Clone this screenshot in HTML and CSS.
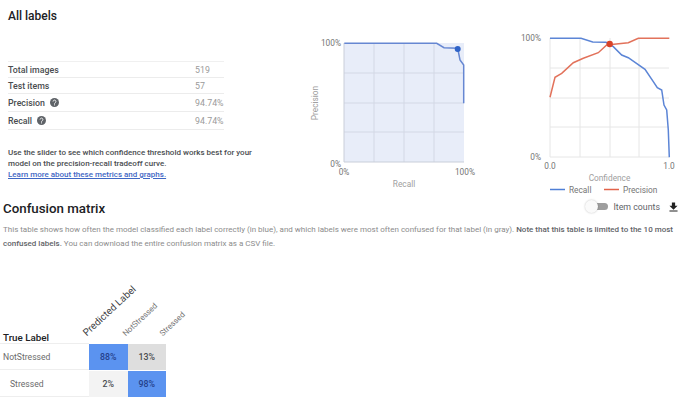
FILE: index.html
```html
<!DOCTYPE html>
<html lang="en">
<head>
<meta charset="utf-8">
<title>Evaluation</title>
<link rel="stylesheet" href="styles.css">
</head>
<body>
<section class="labels">
  <div class="summary">
    <h2 class="title">All labels</h2>
    <table class="stats">
      <tr><th>Total images</th><td>519</td></tr>
      <tr><th>Test items</th><td>57</td></tr>
      <tr class="tall"><th>Precision <svg class="help" viewBox="0 0 24 24"><circle cx="12" cy="12" r="12" fill="#5f6368"/><path d="M8.2 9.4a3.8 3.8 0 1 1 6 3.1c-1.3.9-2.2 1.500-2.200 3" fill="none" stroke="#fff" stroke-width="2.400"/><rect x="10.700" y="17" width="2.600" height="2.600" fill="#fff"/></svg></th><td>94.74%</td></tr>
      <tr class="tall"><th>Recall <svg class="help" viewBox="0 0 24 24"><circle cx="12" cy="12" r="12" fill="#5f6368"/><path d="M8.2 9.4a3.8 3.8 0 1 1 6 3.1c-1.3.9-2.2 1.500-2.200 3" fill="none" stroke="#fff" stroke-width="2.400"/><rect x="10.700" y="17" width="2.600" height="2.600" fill="#fff"/></svg></th><td>94.74%</td></tr>
    </table>
    <p class="hint">Use the slider to see which confidence threshold works best for your model on the precision-recall tradeoff curve.<br><a href="#">Learn more about these metrics and graphs.</a></p>
  </div>
  <svg class="chart-pr" viewBox="310 30 180 165">
    <rect x="344" y="43" width="120" height="119" fill="#e8edf9"/>
    <path d="M374 43V162M404 43V162M434 43V162M344 73H464M344 103H464M344 132H464" stroke="#d3d8e5" stroke-width="1" fill="none"/>
    <path d="M344 162H464M344 43V162" stroke="#c9ced9" stroke-width="1" fill="none"/>
    <polyline points="344.300,43.300 436.700,43.300 444,47.700 457.700,48.300 460,60 463.700,65 463.700,103.300" fill="none" stroke="#6687d2" stroke-width="1.500"/>
    <circle cx="457.700" cy="49" r="3" fill="#2f63c8"/>
    <text class="axis end" x="341" y="46">100%</text>
    <text class="axis end" x="341" y="167">0%</text>
    <text class="axis mid" x="344" y="175">0%</text>
    <text class="axis mid" x="465" y="175">100%</text>
    <text class="axis mid light" x="404" y="187">Recall</text>
    <text class="axis mid light" transform="translate(318 103) rotate(-90)">Precision</text>
  </svg>
  <svg class="chart-conf" viewBox="510 25 177 170">
    <path d="M550 68H669M550 98H669M550 127H669M580 38V157M610 38V157M639 38V157M550 38V157M550 157H669" stroke="#e6e6e6" stroke-width="1" fill="none"/>
    <polyline points="550,38.300 581,38.300 592.700,42 606,42.300 613.300,46.700 621.700,55 628.300,57.700 645,69.300 653.300,81.700 657.300,87.700 661.700,90 664,105 666.700,110 668.300,130 669.300,157.300" fill="none" stroke="#5c85d6" stroke-width="1.500"/>
    <polyline points="550,97.300 555,77.300 561.700,73.300 573.300,62.700 583.300,58.300 598.300,52.700 606.700,45 628.300,42.700 638.300,38.300 669.300,38.300" fill="none" stroke="#e2725b" stroke-width="1.500"/>
    <circle cx="609.700" cy="44" r="3.200" fill="#d8432a"/>
    <text class="axis end" x="541" y="41">100%</text>
    <text class="axis end" x="541" y="160">0%</text>
    <text class="axis mid" x="550" y="169">0.0</text>
    <text class="axis mid" x="669" y="169">1.0</text>
    <text class="axis mid light" x="609.500" y="181">Confidence</text>
    <path d="M550 189.500H565" stroke="#4f7fd6" stroke-width="1.500"/>
    <text class="axis" x="569" y="192.500">Recall</text>
    <path d="M604 189.500H619" stroke="#e2634a" stroke-width="1.500"/>
    <text class="axis" x="623" y="192.500">Precision</text>
  </svg>
</section>
<section class="confusion">
  <div class="confusion-head">
    <h2 class="title big">Confusion matrix</h2>
    <div class="tools">
      <span class="toggle"><span class="knob"></span></span>
      <span class="tool-label">Item counts</span>
      <svg class="download" viewBox="0 0 10 10"><path d="M3.200 0H6.800V3.500H9.500L5 8 .5 3.500H3.200ZM.5 8.800H9.500V10H.5Z" fill="#222"/></svg>
    </div>
  </div>
  <div class="desc">
    <p class="desc-line">This table shows how often the model classified each label correctly (in blue), and which labels were most often confused for that label (in gray). <b>Note that this table is limited to the 10 most</b></p>
    <p class="desc-line"><b>confused labels.</b> You can download the entire confusion matrix as a CSV file.</p>
  </div>
  <div class="matrix">
    <div class="mrow head">
      <div class="rowlabel true">True Label</div>
      <div class="col"><span class="rot strong">Predicted Label</span></div>
      <div class="col"><span class="rot shift1">NotStressed</span></div>
      <div class="col spacer"><span class="rot shift2">Stressed</span></div>
    </div>
    <div class="mrow line">
      <div class="rowlabel">NotStressed</div>
      <div class="cell blue">88%</div>
      <div class="cell grey">13%</div>
    </div>
    <div class="mrow line">
      <div class="rowlabel indent">Stressed</div>
      <div class="cell pale">2%</div>
      <div class="cell blue">98%</div>
    </div>
  </div>
</section>
</body>
</html>
```
FILE: styles.css
```css
* { box-sizing: border-box; }
html, body { margin: 0; padding: 0; }
body {
  width: 687px;
  height: 404px;
  overflow: hidden;
  background: #fff;
  font-family: Roboto, "Liberation Sans", sans-serif;
  color: #3c4043;
}
.labels {
  display: flex;
  height: 195px;
}
.summary {
  width: 310px;
  flex: none;
  padding: 9px 0 0 8px;
}
.title {
  margin: 0;
  font-size: 12px;
  line-height: 15px;
  font-weight: 500;
  color: #202124;
}
.title.big {
  font-size: 13.300px;
  line-height: 18px;
  padding-top: 1px;
}
.stats {
  width: 216px;
  margin-top: 37px;
  border-collapse: collapse;
  border-top: 1px solid #f0f0f0;
  font-size: 8.800px;
}
.stats tr { height: 16px; border-bottom: 1px solid #ececec; }
.stats tr.tall { height: 18px; }
.stats th {
  padding: 0;
  text-align: left;
  font-weight: 500;
  color: #4a4d50;
}
.stats td {
  width: 29px;
  padding: 0;
  color: #9a9a9a;
}
.help {
  width: 9px;
  height: 9px;
  margin-left: 3px;
  vertical-align: -1.500px;
}
.hint {
  margin: 17px 0 0;
  width: 250px;
  font-size: 8px;
  line-height: 11px;
  font-weight: 500;
  color: #4a4d50;
}
.hint a {
  color: #3f67c4;
  text-decoration: underline;
}
.chart-pr { width: 180px; height: 165px; margin-top: 30px; flex: none; }
.chart-conf { width: 177px; height: 170px; margin-top: 25px; margin-left: 20px; flex: none; }
.axis {
  font-family: Roboto, "Liberation Sans", sans-serif;
  font-size: 8.300px;
  fill: #757575;
}
.axis.light { fill: #a0a0a0; }
.axis.end { text-anchor: end; }
.axis.mid { text-anchor: middle; }
.confusion-head {
  display: flex;
  align-items: center;
  justify-content: space-between;
  padding: 0 9px 0 3px;
  height: 26px;
}
.tools { display: flex; align-items: center; padding-bottom: 3px; }
.toggle {
  position: relative;
  display: block;
  width: 20px;
  height: 7px;
  border-radius: 4px;
  background: #9e9e9e;
}
.knob {
  position: absolute;
  left: -3px;
  top: -3px;
  width: 13px;
  height: 13px;
  border-radius: 50%;
  background: #fafafa;
  box-shadow: 0 0 2px rgba(0, 0, 0, .25);
}
.tool-label {
  margin-left: 5px;
  font-size: 8.800px;
  color: #5f6368;
}
.download {
  width: 9px;
  height: 10px;
  margin-left: 9px;
}
.desc {
  margin: 2px 0 0;
  padding: 0 3px;
  font-size: 8px;
  line-height: 14px;
  color: #8c8c8c;
}
.desc-line { margin: 0; white-space: nowrap; }
.desc b { font-weight: 500; color: #5f6368; }
.matrix { margin-top: 73px; }
.mrow { display: flex; align-items: stretch; }
.mrow.head { height: 20px; align-items: flex-end; }
.mrow.line { height: 27px; border-bottom: 1px solid transparent; }
.rowlabel {
  width: 89px;
  flex: none;
  padding-left: 3px;
  display: flex;
  align-items: center;
  font-size: 8.600px;
  color: #6b6b6b;
  border-bottom: 1px solid #eeeeee;
}
.rowlabel.true {
  height: 20px;
  font-size: 9.800px;
  font-weight: 500;
  color: #202124;
  padding-top: 7px;
}
.rowlabel.indent { padding-left: 10px; }
.col { width: 38.500px; height: 20px; position: relative; flex: none; }
.rot {
  position: absolute;
  white-space: nowrap;
  font-size: 8px;
  color: #757575;
  transform-origin: left bottom;
  transform: rotate(-43deg);
}
.rot.strong { left: -1px; bottom: 6px; font-size: 9.900px; color: #3c4043; }
.rot.shift1 { left: -1px; bottom: 6px; }
.rot.shift2 { left: -2px; bottom: 6px; }
.cell {
  width: 38.500px;
  flex: none;
  display: flex;
  align-items: center;
  justify-content: center;
  font-size: 8.800px;
  font-weight: 500;
}
.cell.blue { background: #5b93f0; color: #24408a; }
.cell.grey { background: #dedede; color: #4a4d50; }
.cell.pale { background: #f3f3f3; color: #4a4d50; }
```
